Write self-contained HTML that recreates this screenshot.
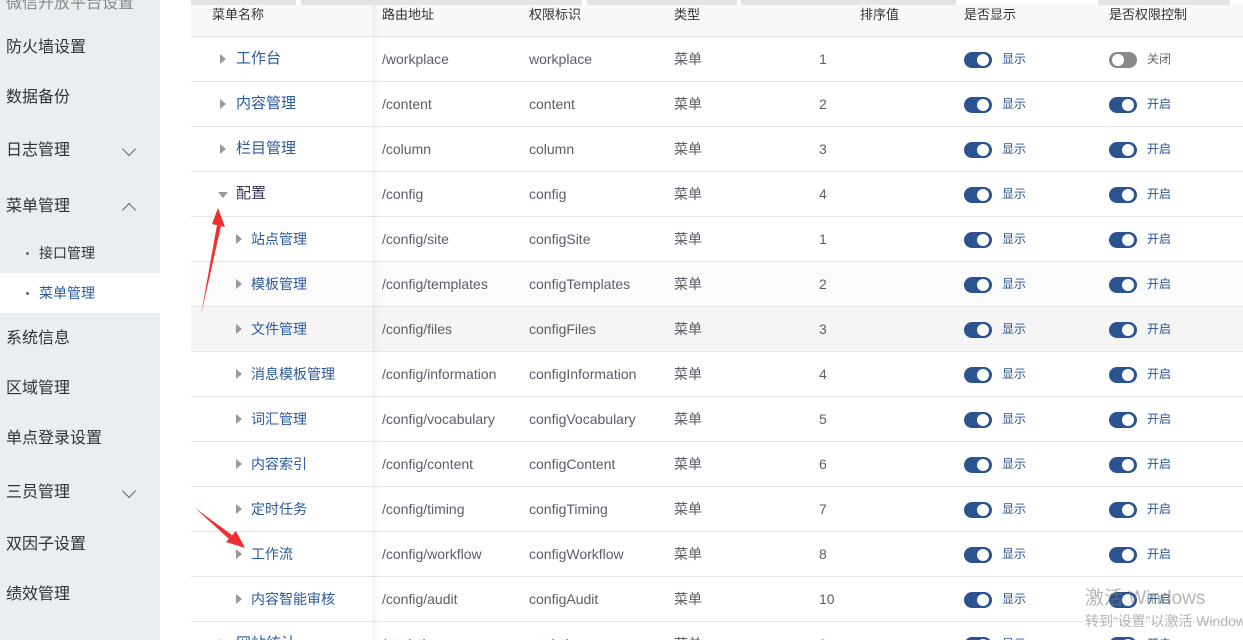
<!DOCTYPE html>
<html style="height:640px;overflow:hidden"><head><meta charset="utf-8"><style>
*{margin:0;padding:0;box-sizing:border-box}
html,body{width:1243px;height:640px;overflow:hidden}
body{background:#fff;font-family:"Liberation Sans","Noto Sans CJK SC",sans-serif;position:relative}
.sb{position:absolute;left:0;top:0;width:160px;height:640px;background:#eaedf1}
.si{position:absolute;left:6px;font-size:16px;color:#303133;line-height:20px}
.sub{position:absolute;left:0;width:160px;height:40px;font-size:14px;color:#303133;line-height:40px;padding-left:39px}
.sub:before{content:"";position:absolute;left:26px;top:19px;width:3px;height:3px;border-radius:50%;background:#666}
.chev{position:absolute;left:124px;width:10px;height:10px;border-right:1.3px solid #666;border-bottom:1.3px solid #666}
.abs{position:absolute}
.row{position:absolute;left:191px;width:1052px;height:45px;border-bottom:1px solid #e6e6e6}
.c{position:absolute;top:0;line-height:44px;font-size:14px;color:#5a5e66;white-space:nowrap}
.nm{color:#2b5a9e;font-size:15px}
.tri{position:absolute;top:17px;width:0;height:0;border-top:5px solid transparent;border-bottom:5px solid transparent;border-left:6px solid #999}
.sw{position:absolute;top:15px;width:28px;height:16px;border-radius:8px;background:#2b5390}
.sw:after{content:"";position:absolute;right:3px;top:2px;width:12px;height:12px;border-radius:50%;background:#fff}
.sw.off{background:#888}.sw.off:after{right:auto;left:3px}
.lb{position:absolute;line-height:44px;font-size:12px;color:#2b5390}
.hd{position:absolute;top:5px;left:191px;width:1052px;height:32px;background:#f8f8f8;border-bottom:1px solid #e4e4e4}
.hd span{position:absolute;top:0;line-height:20px;font-size:13px;color:#333}
</style></head><body>
<div class="sb">
<div class="si" style="top:-6px;color:#888">微信开放平台设置</div>
<div class="si" style="top:38px">防火墙设置</div>
<div class="si" style="top:88px">数据备份</div>
<div class="si" style="top:141px">日志管理</div><div class="chev" style="top:144px;transform:rotate(45deg)"></div>
<div class="si" style="top:197px">菜单管理</div><div class="chev" style="top:205px;transform:rotate(-135deg)"></div>
<div class="sub" style="top:233px">接口管理</div>
<div class="sub" style="top:273px;background:#fff;color:#2b5a9e">菜单管理</div>
<div class="si" style="top:329px">系统信息</div>
<div class="si" style="top:379px">区域管理</div>
<div class="si" style="top:429px">单点登录设置</div>
<div class="si" style="top:483px">三员管理</div><div class="chev" style="top:486px;transform:rotate(45deg)"></div>
<div class="si" style="top:535px">双因子设置</div>
<div class="si" style="top:585px">绩效管理</div>
</div>
<div class="abs" style="left:191px;top:0;width:105px;height:5px;background:#e4e4e4"></div>
<div class="abs" style="left:301px;top:0;width:281px;height:5px;background:#e4e4e4"></div>
<div class="abs" style="left:587px;top:0;width:150px;height:5px;background:#e4e4e4"></div>
<div class="abs" style="left:741px;top:0;width:215px;height:5px;background:#e4e4e4"></div>
<div class="abs" style="left:1098px;top:0;width:132px;height:5px;background:#e4e4e4"></div>
<div class="abs" style="left:191px;top:0;width:1px;height:640px;background:#e4e4e4"></div>
<div class="hd">
<span style="left:21px">菜单名称</span><span style="left:191px">路由地址</span><span style="left:338px">权限标识</span><span style="left:483px">类型</span><span style="left:669px">排序值</span><span style="left:773px">是否显示</span><span style="left:918px">是否权限控制</span>
</div>
<div id="rows"></div>
<div class="abs" style="left:372px;top:5px;width:8px;height:635px;background:linear-gradient(90deg,rgba(0,0,0,.04),rgba(0,0,0,0))"></div>
<svg class="abs" style="left:0;top:0" width="1243" height="640">
<polygon points="218,208 225,227 212,224" fill="#f03030"/>
<polygon points="201,315 217,225 221,226" fill="#f03030"/>
<polygon points="245,548 226,542 236,531" fill="#f03030"/>
<polygon points="195,508 232,535 229,539" fill="#f03030"/>
</svg>
<div class="abs" style="left:1085px;top:583px;font-size:19px;color:rgba(120,120,120,.55)">激活 Windows</div>
<div class="abs" style="left:1085px;top:611px;font-size:14px;color:rgba(120,120,120,.55);white-space:nowrap">转到“设置”以激活 Windows。</div>
<script>
var d=[[59,0,"工作台","/workplace","workplace",1,0,0],[104,0,"内容管理","/content","content",2],[149,0,"栏目管理","/column","column",3],[194,2,"配置","/config","config",4],
[239,1,"站点管理","/config/site","configSite",1],[284,1,"模板管理","/config/templates","configTemplates",2],[329,1,"文件管理","/config/files","configFiles",3],[374,1,"消息模板管理","/config/information","configInformation",4],[419,1,"词汇管理","/config/vocabulary","configVocabulary",5],[464,1,"内容索引","/config/content","configContent",6],[509,1,"定时任务","/config/timing","configTiming",7],[554,1,"工作流","/config/workflow","configWorkflow",8],[599,1,"内容智能审核","/config/audit","configAudit",10],[644,0,"网站统计","/statistic","statistic",9]];
var h="";
d.forEach(function(r){var t=r[0]-22,lv=r[1];
var bg=r[0]==329?"#f5f5f5":(r[0]==284?"#fbfbfb":"#fff");
var tri=lv==2?'<div class="abs" style="left:27px;top:20px;border-left:5px solid transparent;border-right:5px solid transparent;border-top:6px solid #999"></div>':'<div class="tri" style="left:'+(lv==1?45:29)+'px"></div>';
var nx=lv==1?60:45, ns=lv==1?"font-size:14px":"", nc=lv==2?"color:#3a3a55":"";
var off=r[6]===0;
h+='<div class="row" style="top:'+t+'px;background:'+bg+'">'+tri+
'<div class="c nm" style="left:'+nx+'px;'+ns+';'+nc+'">'+r[2]+'</div>'+
'<div class="c" style="left:191px">'+r[3]+'</div><div class="c" style="left:338px">'+r[4]+'</div><div class="c" style="left:483px">菜单</div><div class="c" style="left:628px">'+r[5]+'</div>'+
'<div class="sw" style="left:773px"></div><div class="lb" style="left:811px">显示</div>'+
'<div class="sw'+(off?' off':'')+'" style="left:918px"></div><div class="lb" style="left:956px;'+(off?'color:#666':'')+'">'+(off?'关闭':'开启')+'</div></div>';});
document.getElementById("rows").innerHTML=h;
</script>
</body></html>
